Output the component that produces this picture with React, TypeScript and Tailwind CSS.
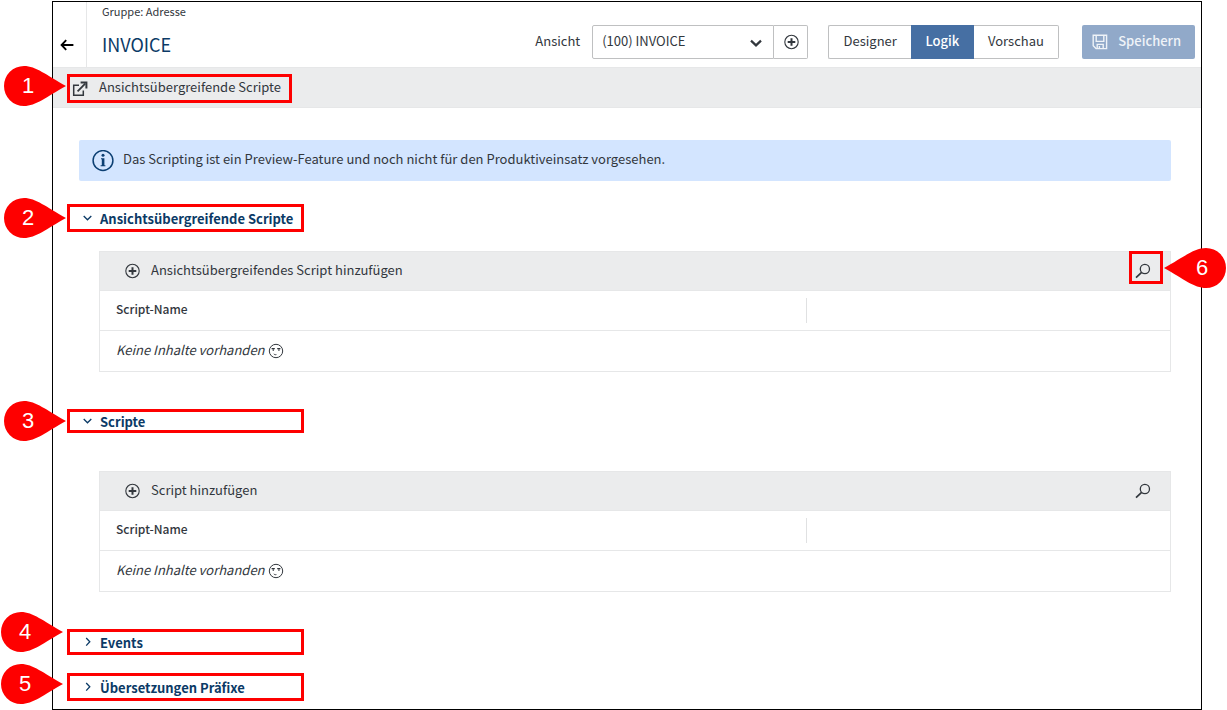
import React, { useState } from 'react';
import clsx from 'clsx';

type IconProps = { className?: string };

const PlusCircleIcon = ({ className }: IconProps) => (
  <svg viewBox="0 0 16 16" className={clsx('w-4 h-4 shrink-0', className)} fill="none" stroke="currentColor" aria-hidden="true">
    <circle cx="8.5" cy="8" r="6.7" strokeWidth="1.1" />
    <path d="M8.5 4.2v7.6M4.7 8h7.6" strokeWidth="2" />
  </svg>
);

const SearchIcon = () => (
  <svg viewBox="0 0 16 16" className="w-4 h-4 shrink-0" fill="none" stroke="currentColor" aria-hidden="true">
    <circle cx="9.9" cy="6" r="4.6" strokeWidth="1.3" />
    <path d="M6.6 9.3L1 14.6" strokeWidth="1.7" />
  </svg>
);

const BackIcon = () => (
  <svg viewBox="0 0 16 16" className="w-4 h-4" fill="none" stroke="currentColor" strokeWidth="1.9" aria-hidden="true">
    <path d="M7.2 3.2L2.6 8l4.6 4.8M2.6 8h11.8" />
  </svg>
);

const ExternalIcon = () => (
  <svg viewBox="0 0 16 16" className="w-4 h-4 shrink-0" fill="none" stroke="currentColor" aria-hidden="true">
    <path d="M7 4.2H1.7v10.1h9.6V9.5" strokeWidth="1.5" />
    <path d="M5.6 10.4L13.2 2.6" strokeWidth="1.8" />
    <path d="M8.6 1.6h5.8v5.8" strokeWidth="2" />
  </svg>
);

const SaveIcon = () => (
  <svg viewBox="0 0 16 16" className="w-4 h-4 shrink-0" fill="none" stroke="currentColor" strokeWidth="1.4" aria-hidden="true">
    <path d="M1.2 1.2h13.4v13.4H4L1.2 11.8z" />
    <path d="M4.2 1.2v6.2h7.6V1.2M5.2 14.6v-4.2h6v4.2M7.4 12v2.6" />
  </svg>
);

const InfoIcon = () => (
  <svg viewBox="0 0 22 22" className="w-[22px] h-[22px] shrink-0 text-[#0b3f73]" fill="none" aria-hidden="true">
    <circle cx="11" cy="10.5" r="9.9" stroke="currentColor" strokeWidth="1.5" />
    <circle cx="11" cy="5.2" r="1.5" fill="currentColor" />
    <path d="M9 8.2h3.4v7h1v1H8.6v-1h1.2V9.2H9z" fill="currentColor" />
  </svg>
);

const SmileyIcon = () => (
  <svg viewBox="0 0 16 16" className="w-4 h-4 shrink-0" fill="none" stroke="currentColor" aria-hidden="true">
    <circle cx="8" cy="8" r="6.7" strokeWidth="1" />
    <path d="M3.6 5.6h3.2M9.2 5.6h3.2M4.6 7.1h1.4M10.2 7.1h1.4" strokeWidth="1.2" />
    <path d="M5.8 10.9c.8.8 1.6 1 2.6.7" strokeWidth="1" />
  </svg>
);

const ChevronIcon = ({ open }: { open: boolean }) => (
  <svg viewBox="0 0 10 10" className="w-[10px] h-[10px] shrink-0" fill="none" stroke="currentColor" strokeWidth="1.3" aria-hidden="true">
    <path d={open ? 'M1.7 3L5.5 6.8l3.8-3.8' : 'M4.2 1L7.8 4.8 4.2 8.6'} />
  </svg>
);

interface PinProps {
  label: string;
  flip?: boolean;
  className: string;
}

// Numbered marker drawn on top of the page
const Pin = ({ label, flip, className }: PinProps) => (
  <span className={clsx('absolute z-10 flex w-[62px] h-10 pointer-events-none', flip && 'justify-end', className)}>
    <svg viewBox="0 0 62 40" className={clsx('absolute inset-0 w-full h-full', flip && 'rotate-180')} aria-hidden="true">
      <path d="M20 0C32 0 42 9 62 20 42 31 32 40 20 40A20 20 0 0 1 20 0z" fill="#fe0000" />
    </svg>
    <span className="relative w-12 text-center font-['Liberation_Sans',sans-serif] text-[22px] leading-10 font-normal text-white">
      {label}
    </span>
  </span>
);

interface SectionProps {
  title: string;
  pin: React.ReactNode;
  className: string;
  open: boolean;
  onToggle: () => void;
}

const SectionHeader = ({ title, pin, className, open, onToggle }: SectionProps) => (
  <h2 className={clsx('relative ml-[14px] w-[237px] border-3 border-[#fe0000]', className)}>
    {pin}
    <button
      type="button"
      aria-expanded={open}
      onClick={onToggle}
      className="flex h-full w-full items-center gap-2 pl-3 text-left text-[13px] leading-5 font-bold whitespace-nowrap text-[#0b3a66]"
    >
      <ChevronIcon open={open} />
      <span className="pt-0.5">{title}</span>
    </button>
  </h2>
);

const ScriptTable = ({ addLabel, marked }: { addLabel: string; marked?: boolean }) => (
  <div className="ml-[46px] mr-[30px] border border-[#e6e7e8]">
    <div className="flex h-[38px] items-start justify-between bg-[#ebeced] pr-[7px]">
      <button type="button" className="flex h-[38px] items-center gap-[11px] pl-6 text-[13px] leading-5">
        <PlusCircleIcon />
        <span className="pb-0.5">{addLabel}</span>
      </button>
      <div className="relative -mt-px">
        <button
          type="button"
          aria-label="Suchen"
          className={clsx(
            'flex h-[33px] w-[34px] items-end border-3 pl-[3px] pb-0.5',
            marked ? 'border-[#fe0000]' : 'border-transparent'
          )}
        >
          <SearchIcon />
        </button>
        {marked && <Pin label="6" flip className="left-[35px] -top-[3px]" />}
      </div>
    </div>
    <table className="w-full table-fixed border-separate border-spacing-0 text-[13px] leading-5">
      <thead>
        <tr>
          <th className="h-[41px] w-[66%] border-y border-[#e6e7e8] pl-4 pb-1 text-left text-xs leading-5 font-medium">
            Script-Name
          </th>
          <td className="border-y border-[#e6e7e8]">
            <div className="h-[25px] border-l border-[#e0e1e2]" />
          </td>
        </tr>
      </thead>
      <tbody>
        <tr>
          <td colSpan={2} className="h-10 pl-4">
            <span className="flex items-center gap-[3px] italic">
              <span className="pb-0.5">Keine Inhalte vorhanden</span>
              <SmileyIcon />
            </span>
          </td>
        </tr>
      </tbody>
    </table>
  </div>
);

const TABS = ['Designer', 'Logik', 'Vorschau'];

export default function App() {
  const [tab, setTab] = useState('Logik');
  const [open, setOpen] = useState({ shared: true, scripts: true, events: false, prefixes: false });

  const toggle = (key: keyof typeof open) => setOpen({ ...open, [key]: !open[key] });

  return (
    <div className="bg-white pt-px pl-[52px] pr-[25px] font-['Noto_Sans_CJK_SC','Noto_Sans',sans-serif] text-[#32373d]">
      <main className="border border-black pb-2">
        <header className="flex h-[65px]">
          <button type="button" aria-label="Zurück" className="flex w-[34px] items-end border-r border-[#e6e7e8] pl-[6px] pb-[14px] text-black">
            <BackIcon />
          </button>
          <div className="flex-1 pl-[15px]">
            <p className="text-[11px] leading-[18px]">Gruppe: Adresse</p>
            <h1 className="pt-2 text-lg leading-8 text-[#0b3a66]">INVOICE</h1>
          </div>
          <div className="flex items-end pr-[6px] pb-2 text-[13px]">
            <label htmlFor="view" className="pr-3 pb-0.5 leading-8">Ansicht</label>
            <div className="relative">
              <select
                id="view"
                className="h-[34px] w-[182px] appearance-none rounded-l-xs border border-[#bfc0c1] bg-white pl-[9px] pb-0.5 text-[13px]"
              >
                <option>(100) INVOICE</option>
              </select>
              <svg viewBox="0 0 12 12" className="absolute right-3 top-3 w-3 h-3 pointer-events-none" fill="none" stroke="currentColor" strokeWidth="2.2" aria-hidden="true">
                <path d="M1 3.6l5 4.8 5-4.8" />
              </svg>
            </div>
            <button type="button" aria-label="Neue Ansicht" className="flex h-[34px] w-[34px] items-center justify-center rounded-r-xs border border-l-0 border-[#bfc0c1]">
              <PlusCircleIcon />
            </button>
            <div className="ml-5 flex w-[231px]">
              {TABS.map(t => (
                <button
                  key={t}
                  type="button"
                  aria-pressed={tab === t}
                  onClick={() => setTab(t)}
                  className={clsx(
                    'h-[34px] grow border-y px-[14px] pb-0.5 first:rounded-l-xs first:border-l last:rounded-r-xs last:border-r',
                    tab === t ? 'border-[#466fa3] bg-[#466fa3] font-medium text-white' : 'border-[#bfc0c1]'
                  )}
                >
                  {t}
                </button>
              ))}
            </div>
            <button type="button" className="ml-[23px] flex h-[34px] items-center gap-[10px] rounded-xs bg-[#91a9c9] pl-[10px] pr-[14px] font-medium text-[#eff3f8]">
              <SaveIcon />
              <span className="pb-0.5">Speichern</span>
            </button>
          </div>
        </header>

        <div className="flex h-[41px] items-end border-y border-[#e6e7e8] bg-[#ebeced] pl-[14px] pb-1">
          <div className="relative h-[29px] w-[225px] border-3 border-[#fe0000]">
            <Pin label="1" className="-left-[66px] -top-[11px]" />
            <button type="button" className="flex h-full items-center gap-[11px] pl-0.5 text-[13px] leading-5 whitespace-nowrap">
              <ExternalIcon />
              <span className="pb-1">Ansichtsübergreifende Scripte</span>
            </button>
          </div>
        </div>

        <div role="note" className="mt-8 ml-[26px] mr-[30px] flex h-[41px] items-center gap-[9px] rounded-xs bg-[#d3e5ff] pl-[13px] text-[13px] leading-5">
          <InfoIcon />
          <span className="pb-1">Das Scripting ist ein Preview-Feature und noch nicht für den Produktiveinsatz vorgesehen.</span>
        </div>

        <SectionHeader
          title="Ansichtsübergreifende Scripte"
          className="mt-[23px] mb-[19px] h-7"
          open={open.shared}
          onToggle={() => toggle('shared')}
          pin={<Pin label="2" className="-left-[66px] -top-[9px]" />}
        />
        {open.shared && <ScriptTable addLabel="Ansichtsübergreifendes Script hinzufügen" marked />}

        <SectionHeader
          title="Scripte"
          className="mt-[37px] mb-[38px] h-6"
          open={open.scripts}
          onToggle={() => toggle('scripts')}
          pin={<Pin label="3" className="-left-[66px] -top-[11px]" />}
        />
        {open.scripts && <ScriptTable addLabel="Script hinzufügen" />}

        <SectionHeader
          title="Events"
          className="mt-[37px] h-[26px]"
          open={open.events}
          onToggle={() => toggle('events')}
          pin={<Pin label="4" className="-left-[69px] -top-5" />}
        />
        <SectionHeader
          title="Übersetzungen Präfixe"
          className="mt-[18px] h-7"
          open={open.prefixes}
          onToggle={() => toggle('prefixes')}
          pin={<Pin label="5" className="-left-[69px] -top-3" />}
        />
      </main>
    </div>
  );
}
